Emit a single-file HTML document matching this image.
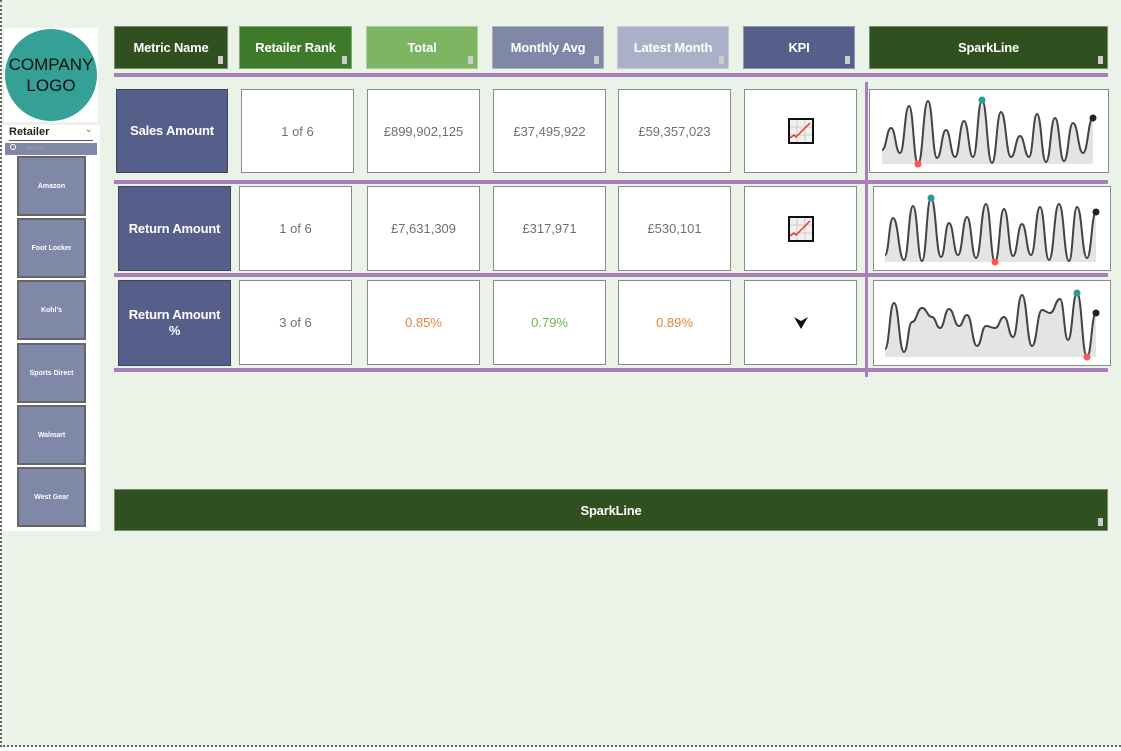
<!DOCTYPE html>
<html><head><meta charset="utf-8"><style>
*{margin:0;padding:0;box-sizing:border-box}
body{width:1121px;height:751px;background:#fff;position:relative;overflow:hidden;font-family:"Liberation Sans","DejaVu Sans",sans-serif}
#bg{position:absolute;left:0;top:0;width:1121px;height:747px;background:#ebf2e7;border-left:2px dotted #666;border-bottom:2px dotted #666}
.a{position:absolute}
.h{position:absolute;top:26px;height:43px;color:#fff;font-weight:bold;font-size:13px;letter-spacing:-0.2px;display:flex;align-items:center;justify-content:center;border:1px solid rgba(255,255,255,.35)}
.h i{position:absolute;right:4px;bottom:4px;width:5px;height:8px;background:#ccc}
.c{position:absolute;background:#fff;border:1px solid #8a8a8a;display:flex;align-items:center;justify-content:center;font-size:13px;color:#707070}
.m{position:absolute;background:#565e8a;border:1px solid #3e4560;color:#fff;font-weight:bold;font-size:13px;letter-spacing:-0.2px;display:flex;align-items:center;justify-content:center;text-align:center;line-height:16px}
.p{position:absolute;background:#a67fba}
.b{position:absolute;left:17px;width:69px;height:60px;background:#8088a8;border:2px solid #666;color:#fff;font-size:7px;font-weight:bold;display:flex;align-items:center;justify-content:center}
</style></head><body>
<div id="bg"></div>
<div class="a" style="left:4px;top:28px;width:94px;height:94px;background:#fff"></div>
<div class="a" style="left:5px;top:29px;width:92px;height:92px;border-radius:50%;background:#35a096;display:flex;align-items:center;justify-content:center;text-align:center;font-size:17px;line-height:21px;color:#111">COMPANY<br>LOGO</div>
<div class="a" style="left:2px;top:125px;width:98px;height:406px;background:#fff"></div>
<div class="a" style="left:9px;top:126px;width:84px;height:15px;border-bottom:1px solid #555;font-size:11px;font-weight:bold;color:#222">Retailer<span style="position:absolute;right:0;top:-2px;font-weight:normal;color:#777;font-size:10px">&#8964;</span></div>
<div class="a" style="left:5px;top:143px;width:92px;height:12px;background:#8088a8;font-size:6px;color:#9aa0bb;padding-left:20px;line-height:12px">Search</div>
<div class="a" style="left:10px;top:144px;width:6px;height:6px;border:1px solid #fff;border-radius:50%"></div>
<div class="b" style="top:156px">Amazon</div>
<div class="b" style="top:218px">Foot Locker</div>
<div class="b" style="top:280px">Kohl's</div>
<div class="b" style="top:343px">Sports Direct</div>
<div class="b" style="top:405px">Walmart</div>
<div class="b" style="top:467px">West Gear</div>
<div class="h" style="left:114px;width:114px;background:#2f501f">Metric Name<i></i></div>
<div class="h" style="left:239px;width:113px;background:#3f7a2a">Retailer Rank<i></i></div>
<div class="h" style="left:366px;width:112px;background:#7db563">Total<i></i></div>
<div class="h" style="left:492px;width:112px;background:#8088a8">Monthly Avg<i></i></div>
<div class="h" style="left:617px;width:112px;background:#aab0c8">Latest Month<i></i></div>
<div class="h" style="left:743px;width:112px;background:#565e8a">KPI<i></i></div>
<div class="h" style="left:869px;width:239px;background:#2f501f">SparkLine<i></i></div>
<div class="p" style="left:114px;top:73px;width:994px;height:4px"></div>
<div class="p" style="left:114px;top:180px;width:994px;height:4px"></div>
<div class="p" style="left:114px;top:273px;width:994px;height:4px"></div>
<div class="p" style="left:114px;top:368px;width:994px;height:4px"></div>
<div class="p" style="left:865px;top:82px;width:3px;height:295px"></div>
<div class="m" style="left:116px;top:89px;width:112px;height:84px">Sales Amount</div>
<div class="c" style="left:241px;top:89px;width:113px;height:84px">1 of 6</div>
<div class="c" style="left:367px;top:89px;width:113px;height:84px">£899,902,125</div>
<div class="c" style="left:493px;top:89px;width:113px;height:84px">£37,495,922</div>
<div class="c" style="left:618px;top:89px;width:113px;height:84px">£59,357,023</div>
<div class="c" style="left:744px;top:89px;width:113px;height:84px"><svg width="26" height="26" viewBox="0 0 26 26"><rect x="1" y="1" width="24" height="24" fill="#f0f0f0" stroke="#111" stroke-width="2"/><path d="M9 2V24M17 2V24M2 9H24M2 17H24" stroke="#ccc"/><path d="M2 20L6 17L8 19L22 5" fill="none" stroke="#e33" stroke-width="1.5"/></svg></div>
<div class="m" style="left:118px;top:186px;width:113px;height:85px">Return Amount</div>
<div class="c" style="left:239px;top:186px;width:113px;height:85px">1 of 6</div>
<div class="c" style="left:367px;top:186px;width:113px;height:85px">£7,631,309</div>
<div class="c" style="left:493px;top:186px;width:113px;height:85px">£317,971</div>
<div class="c" style="left:618px;top:186px;width:113px;height:85px">£530,101</div>
<div class="c" style="left:744px;top:186px;width:113px;height:85px"><svg width="26" height="26" viewBox="0 0 26 26"><rect x="1" y="1" width="24" height="24" fill="#f0f0f0" stroke="#111" stroke-width="2"/><path d="M9 2V24M17 2V24M2 9H24M2 17H24" stroke="#ccc"/><path d="M2 20L6 17L8 19L22 5" fill="none" stroke="#e33" stroke-width="1.5"/></svg></div>
<div class="m" style="left:118px;top:280px;width:113px;height:86px">Return Amount<br>%</div>
<div class="c" style="left:239px;top:280px;width:113px;height:85px">3 of 6</div>
<div class="c" style="left:367px;top:280px;width:113px;height:85px;color:#e8823c">0.85%</div>
<div class="c" style="left:493px;top:280px;width:113px;height:85px;color:#6ab450">0.79%</div>
<div class="c" style="left:618px;top:280px;width:113px;height:85px;color:#e8823c">0.89%</div>
<div class="c" style="left:744px;top:280px;width:113px;height:85px"><svg width="16" height="14" viewBox="0 0 16 14"><path d="M1 1L8 5L15 1L8 13Z" fill="#111"/></svg></div>
<svg class="a" style="left:0;top:0" width="1121" height="751" viewBox="0 0 1121 751">
<g fill="#fff" stroke="#8a8a8a"><rect x="869.5" y="89.5" width="239" height="83"/><rect x="873.5" y="186.5" width="237" height="84"/><rect x="873.5" y="280.5" width="237" height="85"/></g>
<path id="f1" fill="#e4e4e4"/><path id="f2" fill="#e4e4e4"/><path id="f3" fill="#e4e4e4"/>
<path id="l1" fill="none" stroke="#444" stroke-width="2"/><path id="l2" fill="none" stroke="#444" stroke-width="2"/><path id="l3" fill="none" stroke="#444" stroke-width="2"/>
<circle cx="918" cy="164" r="3.5" fill="#f55"/><circle cx="982" cy="100" r="3.5" fill="#2a9a98"/><circle cx="1093" cy="118" r="3.5" fill="#222"/>
<circle cx="995" cy="262" r="3.5" fill="#f55"/><circle cx="931" cy="198" r="3.5" fill="#2a9a98"/><circle cx="1096" cy="212" r="3.5" fill="#222"/>
<circle cx="1087" cy="357" r="3.5" fill="#f55"/><circle cx="1077" cy="293" r="3.5" fill="#2a9a98"/><circle cx="1096" cy="313" r="3.5" fill="#222"/>
</svg>
<div class="h" style="left:114px;top:489px;width:994px;height:42px;background:#2f501f">SparkLine<i></i></div>
<script>
var D=[[164,"882,150 891,128 900,153 909,106 918,164 928,101 937,158 946,130 955,157 964,121 973,157 982,100 992,163 1001,112 1011,157 1020,136 1029,157 1037,114 1046,162 1055,118 1064,161 1073,123 1083,153 1093,118"],
[262,"885,255 893,218 904,260 913,206 922,261 931,198 941,257 949,223 958,255 967,217 976,258 986,204 995,262 1004,209 1013,256 1022,224 1031,255 1040,207 1049,260 1059,204 1069,261 1077,207 1087,258 1096,212"],
[357,"885,349 894,303 904,352 912,322 922,308 932,317 940,328 949,309 959,326 967,315 977,346 986,326 995,328 1004,317 1013,337 1022,295 1032,346 1042,310 1050,313 1060,299 1068,340 1077,293 1087,357 1096,313"]];
D.forEach(function(d,k){var p=d[1].split(" ").map(function(s){return s.split(",").map(Number)});
var s="M"+p[0][0]+","+p[0][1];
for(var i=0;i<p.length-1;i++){var a=p[i],b=p[i+1],mx=(a[0]+b[0])/2;s+=" C"+mx+","+a[1]+" "+mx+","+b[1]+" "+b[0]+","+b[1];}
document.getElementById("l"+(k+1)).setAttribute("d",s);
var l=p[p.length-1];document.getElementById("f"+(k+1)).setAttribute("d",s+" L"+l[0]+","+d[0]+" L"+p[0][0]+","+d[0]+"Z");});
</script>
</body></html>
